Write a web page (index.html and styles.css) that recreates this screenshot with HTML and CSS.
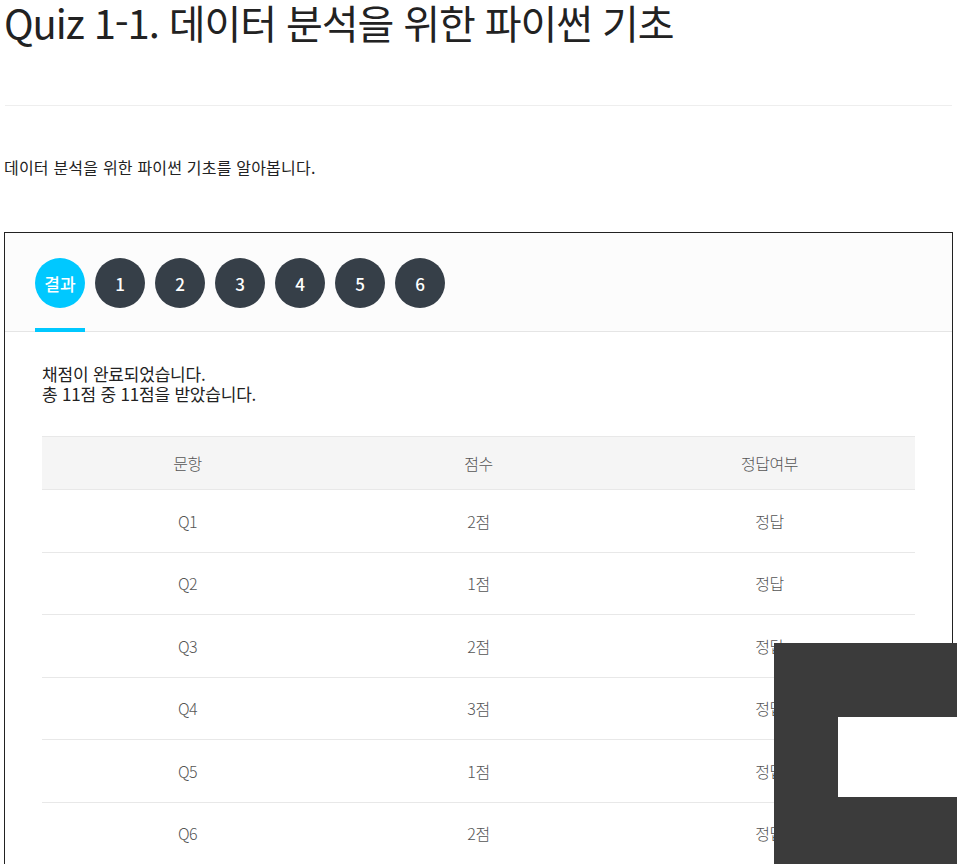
FILE: index.html
```html
<!DOCTYPE html>
<html lang="ko">
<head>
<meta charset="utf-8">
<title>Quiz 1-1</title>
<link rel="stylesheet" href="styles.css">
</head>
<body>
<div class="page">
  <h1 class="title">Quiz 1-1. 데이터 분석을 위한 파이썬 기초</h1>
  <hr class="divider">
  <p class="desc">데이터 분석을 위한 파이썬 기초를 알아봅니다.</p>
  <div class="quiz">
    <div class="tabs">
      <div class="tab active"><span class="circle">결과</span></div>
      <div class="tab"><span class="circle">1</span></div>
      <div class="tab"><span class="circle">2</span></div>
      <div class="tab"><span class="circle">3</span></div>
      <div class="tab"><span class="circle">4</span></div>
      <div class="tab"><span class="circle">5</span></div>
      <div class="tab"><span class="circle">6</span></div>
    </div>
    <div class="result">
      <p class="summary">채점이 완료되었습니다.<br>총 11점 중 11점을 받았습니다.</p>
      <table class="score">
        <thead>
          <tr><th>문항</th><th>점수</th><th>정답여부</th></tr>
        </thead>
        <tbody>
          <tr><td>Q1</td><td>2점</td><td>정답</td></tr>
          <tr><td>Q2</td><td>1점</td><td>정답</td></tr>
          <tr><td>Q3</td><td>2점</td><td>정답</td></tr>
          <tr><td>Q4</td><td>3점</td><td>정답</td></tr>
          <tr><td>Q5</td><td>1점</td><td>정답</td></tr>
          <tr><td>Q6</td><td>2점</td><td>정답</td></tr>
        </tbody>
      </table>
    </div>
  </div>
</div>
<div class="overlay"><div class="overlay-hole"></div></div>
</body>
</html>
```
FILE: styles.css
```css
html, body {
  margin: 0;
  padding: 0;
  background: #fff;
  overflow: hidden;
}
body {
  font-family: "Noto Sans CJK KR", "Noto Sans", sans-serif;
  color: #222;
}
.page {
  padding: 0 4px;
}
.title {
  margin: 0;
  padding-top: 0;
  font-size: 40px;
  font-weight: 400;
  line-height: 44px;
  color: #222;
  letter-spacing: -1.1px;
}
.divider {
  border: 0;
  border-top: 1px solid #eeeeee;
  margin: 61px 1px 0 1px;
}
.desc {
  margin: 49px 0 0 0;
  font-size: 16px;
  line-height: 24px;
  letter-spacing: 0.2px;
}
.quiz {
  margin-top: 53px;
  border: 1px solid #222;
  width: 947px;
}
.tabs {
  display: flex;
  gap: 10px;
  padding: 25px 30px 0 30px;
  background: #fcfcfc;
  border-bottom: 1px solid #e5e5e5;
}
.tab {
  padding-bottom: 20px;
  border-bottom: 4px solid transparent;
  margin-bottom: -1px;
}
.tab.active {
  border-bottom-color: #00c8ff;
}
.circle {
  display: flex;
  align-items: center;
  justify-content: center;
  width: 50px;
  height: 50px;
  border-radius: 50%;
  background: #363f48;
  color: #fff;
  font-size: 17px;
  font-weight: 500;
}
.tab.active .circle {
  background: #00c8ff;
}
.result {
  padding: 32px 37px 0 37px;
}
.summary {
  margin: 0;
  font-size: 17px;
  line-height: 20px;
  letter-spacing: -0.2px;
  color: #222;
}
.score {
  margin-top: 32px;
  width: 873px;
  border-collapse: collapse;
  table-layout: fixed;
}
.score th, .score td {
  padding: 0;
  text-align: center;
  font-size: 16px;
  font-weight: 300;
  color: #555;
  letter-spacing: -0.5px;
}
.score th {
  background: #f5f5f5;
  border-top: 1px solid #e8e8e8;
  border-bottom: 1px solid #e8e8e8;
  height: 52px;
}
.score td {
  height: 61.5px;
  border-bottom: 1px solid #e8e8e8;
}
.overlay {
  position: fixed;
  left: 774px;
  top: 643px;
  right: 0;
  bottom: 0;
  background: #3b3b3b;
}
.overlay-hole {
  position: absolute;
  left: 64px;
  top: 74px;
  right: 0;
  height: 80px;
  background: #fff;
}
```
